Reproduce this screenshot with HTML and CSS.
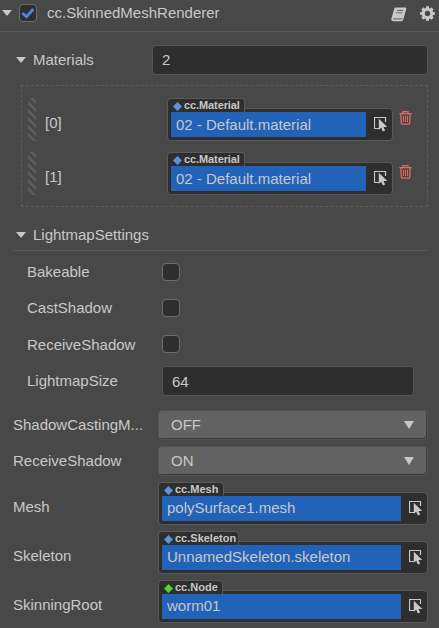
FILE: index.html
```
<!DOCTYPE html>
<html lang="en">
<head>
<meta charset="utf-8">
<title>cc.SkinnedMeshRenderer</title>
<link rel="stylesheet" href="styles.css">
</head>
<body>
<svg width="0" height="0" class="defs">
  <symbol id="pick" viewBox="0 0 14 15"><path d="M5 11.500H.500V.500h11V5" fill="none" stroke="#c8c8c8" stroke-width="1.200"/><path d="M4.800 1.800v11l2.400-2.100 1.700 3.700 2.200-1-1.600-3.300H13.300z" fill="#c8c8c8"/></symbol>
  <symbol id="trash" viewBox="0 0 13 14"><path d="M.3 2.600h12.400M4 2.600V.700h5v1.900M1.900 3l.4 9.200q.1 1 1 1h6.400q.9 0 1-1L11.100 3" fill="none" stroke="#e2695f" stroke-width="1.300"/><path d="M4.500 4.800v6.200M6.500 4.800v6.200M8.500 4.800v6.200" stroke="#e2695f" stroke-width="1"/></symbol>
</svg>
<header class="header">
  <i class="caret"></i>
  <span class="check"><svg width="14" height="12" viewBox="0 0 14 12"><path d="M1.500 6l4 3.800L12.300 2" fill="none" stroke="#4b87e0" stroke-width="2.800"/></svg></span>
  <span class="title">cc.SkinnedMeshRenderer</span>
  <svg class="book" width="16" height="15" viewBox="0 0 16 15"><path d="M4.600.500h10.100q.9.200.6 1.200l-3 10.800q-.5 1.700-2 1.700H2Q0 13.900.3 11.800L3.300 1.600Q3.600.500 4.600.500z" fill="#c8c8c8"/><path d="M6 3.500h6M5.400 5.800h6M2 11.900h8.300q.8 0 1-.8" fill="none" stroke="#4a4a4a" stroke-width=".8"/></svg>
  <svg class="gear" width="15" height="15" viewBox="-7.500 -7.500 15 15"><circle r="4.200" fill="none" stroke="#c8c8c8" stroke-width="3"/><path d="M0-7.300V-5M0 7.300V5M-7.300 0H-5M7.300 0H5M-5.100-5.100l1.500 1.500M5.100 5.100L3.600 3.600M-5.100 5.100l1.500-1.500M5.100-5.100L3.600-3.600" stroke="#c8c8c8" stroke-width="3"/></svg>
</header>
<main>
  <div class="row materials"><i class="caret"></i><span class="label">Materials</span><div class="input">2</div></div>
  <div class="list">
    <div class="item"><i class="grip"></i><span class="label">[0]</span><div class="asset"><span class="tab material"><i></i>cc.Material</span><div class="box"><span class="value">02 - Default.material</span><svg class="pick"><use href="#pick"/></svg></div></div><svg class="trash"><use href="#trash"/></svg></div>
    <div class="item"><i class="grip"></i><span class="label">[1]</span><div class="asset"><span class="tab material"><i></i>cc.Material</span><div class="box"><span class="value">02 - Default.material</span><svg class="pick"><use href="#pick"/></svg></div></div><svg class="trash"><use href="#trash"/></svg></div>
  </div>
  <div class="section"><i class="caret"></i><span class="label">LightmapSettings</span></div>
  <div class="settings">
    <div class="row"><span class="label">Bakeable</span><span class="check"></span></div>
    <div class="row"><span class="label">CastShadow</span><span class="check"></span></div>
    <div class="row"><span class="label low">ReceiveShadow</span><span class="check"></span></div>
    <div class="row"><span class="label low">LightmapSize</span><div class="input low">64</div></div>
  </div>
  <div class="props">
    <div class="row"><span class="label">ShadowCastingM...</span><div class="select">OFF<i></i></div></div>
    <div class="row"><span class="label">ReceiveShadow</span><div class="select">ON<i></i></div></div>
    <div class="row tall"><span class="label">Mesh</span><div class="asset"><span class="tab mesh"><i></i>cc.Mesh</span><div class="box"><span class="value">polySurface1.mesh</span><svg class="pick"><use href="#pick"/></svg></div></div></div>
    <div class="row tall"><span class="label">Skeleton</span><div class="asset"><span class="tab skeleton"><i></i>cc.Skeleton</span><div class="box"><span class="value">UnnamedSkeleton.skeleton</span><svg class="pick"><use href="#pick"/></svg></div></div></div>
    <div class="row tall"><span class="label">SkinningRoot</span><div class="asset"><span class="tab node"><i></i>cc.Node</span><div class="box"><span class="value">worm01</span><svg class="pick"><use href="#pick"/></svg></div></div></div>
  </div>
</main>
</body>
</html>
```
FILE: styles.css
```
* { box-sizing: border-box; }
body { margin: 0; height: 628px; overflow: hidden; background: #484848; color: #c8c8c8; font: 15px/18px "Liberation Sans", Arial, sans-serif; }
svg { display: block; flex: none; }
.defs { position: absolute; }
.header { display: flex; align-items: center; height: 32px; padding: 0 4px 5px 2px; border-bottom: 1px solid #5a5a5a; }
.caret { flex: none; width: 10px; height: 6px; background: #c8c8c8; clip-path: polygon(0 0, 100% 0, 50% 100%); }
.check { display: flex; flex: none; align-items: center; justify-content: center; width: 18px; height: 18px; background: #2e2e2e; border: 1px solid #6c6c6c; border-radius: 4px; }
.header .check { margin-left: 7px; }
.title { flex: 1; margin-left: 10px; }
.book { margin: 2px 13px 0 0; }
.row { display: flex; align-items: center; height: 36px; }
.label { white-space: nowrap; }
.input { height: 30px; padding: 0 9px; line-height: 28px; background: #2e2e2e; border: 1px solid #565656; border-radius: 4px; }
.label.low { padding-top: 2px; }
.input.low { line-height: 30px; }
.settings .input { position: relative; top: 1px; }
.materials { height: 30px; margin-top: 13px; padding: 0 11px 0 16px; }
.materials .label { width: 119px; margin-left: 7px; }
.materials .input { flex: 1; }
.list { height: 122px; margin: 10px 11px 0 21px; padding: 12px 14px 0 6px; border: 1px dashed #5c5c5c; }
.item { display: flex; height: 43px; margin-bottom: 11px; }
.grip { width: 8px; height: 43px; background: repeating-linear-gradient(45deg, #484848 0 2.83px, #5a5a5a 2.83px 5.66px); }
.item .label { width: 122px; margin-left: 9px; padding-top: 16px; }
.item .asset { flex: none; width: 226px; }
.trash { width: 13px; height: 14px; margin: 13px 0 0 6px; }
.asset { display: flex; flex-direction: column; flex: 1; }
.tab { position: relative; z-index: 1; display: flex; align-items: center; height: 14px; margin-bottom: -4px; padding-left: 5px; background: #2e2e2e; border: 1px solid #5a5a5a; border-bottom: 0; border-radius: 4px 4px 0 0; font-size: 11px; font-weight: bold; line-height: 13px; white-space: nowrap; }
.tab i { width: 9px; height: 9px; margin: 2px 2px 0 0; background: #5a93dc; clip-path: polygon(50% 0, 100% 50%, 50% 100%, 0 50%); }
.tab.node i { background: #55d42a; }
.material { width: 78px; letter-spacing: -.1px; }
.mesh { width: 66px; }
.skeleton { width: 81px; }
.node { width: 65px; }
.box { display: flex; align-items: center; height: 33px; padding: 0 4px 0 3px; background: #2e2e2e; border: 1px solid #5a5a5a; border-radius: 0 4px 4px 4px; }
.value { position: relative; z-index: 2; flex: 1; height: 25px; padding-left: 5px; background: #2262b9; line-height: 25px; white-space: nowrap; }
.pick { width: 14px; height: 15px; margin-left: 8px; }
.section { display: flex; align-items: center; height: 33px; margin: 11px 11px 0 13px; padding: 2px 0 0 3px; border-bottom: 1px solid #5a5a5a; }
.section .label { margin-left: 7px; }
.settings { padding: 3px 25px 0 27px; }
.settings .label { width: 135px; }
.settings .input { flex: 1; }
.props { padding: 9px 11px 0 13px; }
.props .label { flex: none; width: 132px; margin-right: 13px; }
.select { display: flex; flex: 1; align-items: center; justify-content: space-between; height: 30px; padding: 0 13px 0 12px; background: #626262; border: 1px solid #525252; border-radius: 4px; box-shadow: inset -1px -1px #3a3a3a; }
.select i { width: 10px; height: 8px; background: #c8c8c8; clip-path: polygon(0 0, 100% 0, 50% 100%); }
.row.tall { height: 49px; }
.tall .label { padding-top: 6px; }
.tall .value { line-height: 23px; }
```
